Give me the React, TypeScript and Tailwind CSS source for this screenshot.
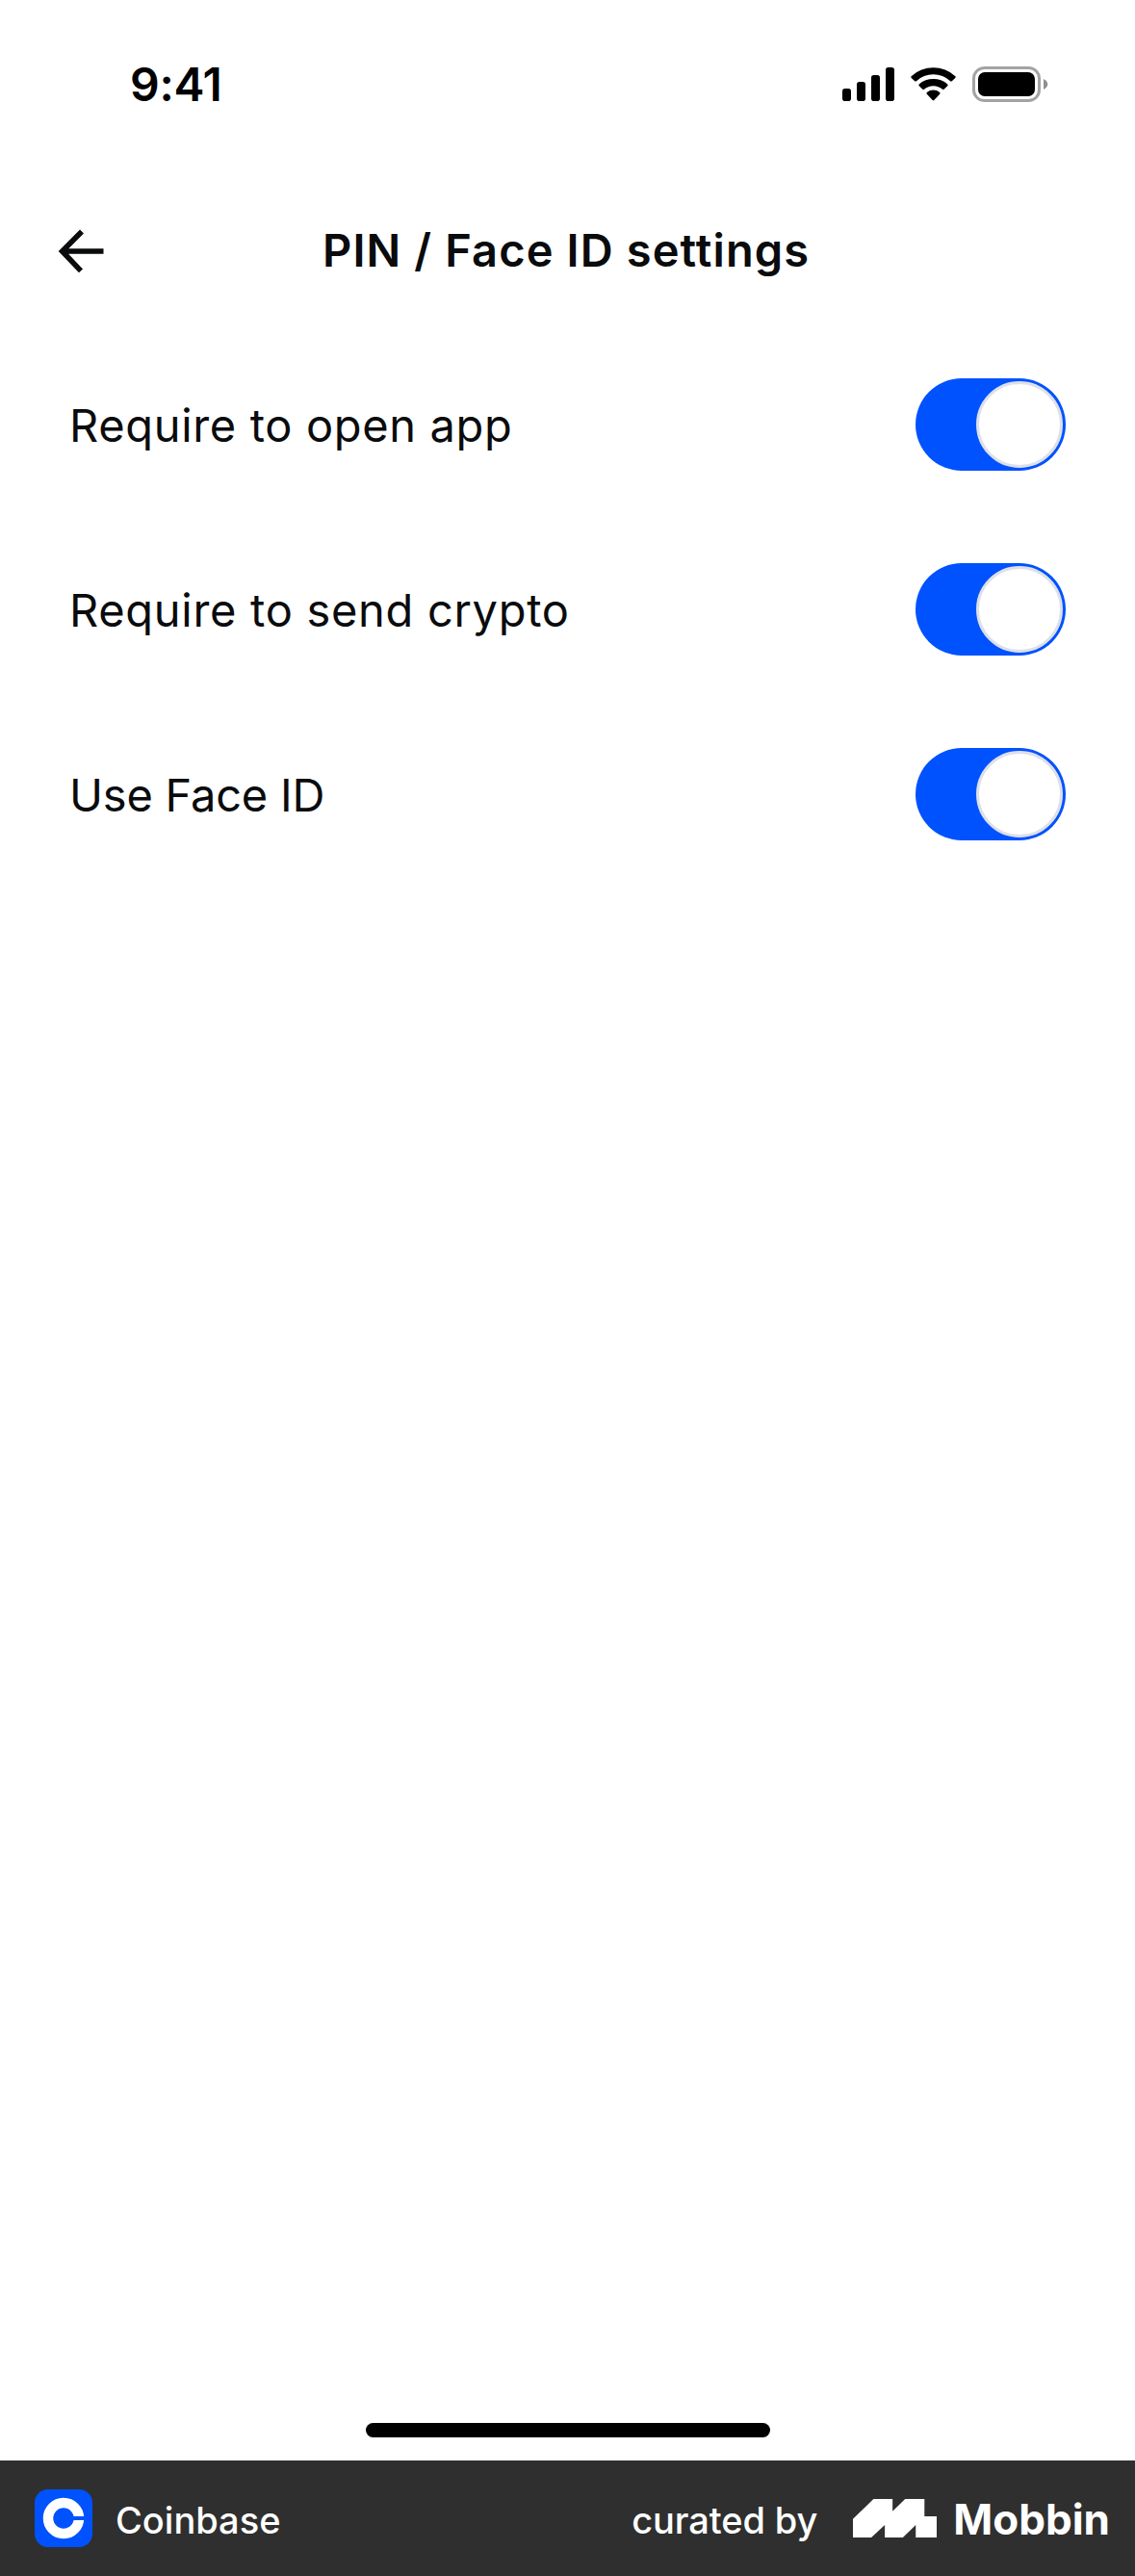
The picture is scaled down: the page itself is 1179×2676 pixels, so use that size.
const rows = [
  { label: "Require to open app", tracking: "tracking-[0.65px]" },
  { label: "Require to send crypto", tracking: "tracking-[0.7px]" },
  { label: "Use Face ID", tracking: "tracking-[-0.2px]" },
];

function Toggle() {
  return (
    <button
      type="button"
      role="switch"
      aria-checked="true"
      className="flex h-24 w-[156px] items-center justify-end rounded-full bg-[#0052ff] pr-[3px]"
    >
      <div className="size-[90px] rounded-full border-[3px] border-[#dde0e8] bg-white" />
    </button>
  );
}

function StatusIcons() {
  return (
    <svg className="h-[39px] w-[216px]" viewBox="874 68 216 39" fill="#000">
      <rect x="875" y="92" width="9" height="13" rx="2.8" />
      <rect x="890" y="85" width="9" height="20" rx="2.8" />
      <rect x="905" y="78" width="9" height="27" rx="2.8" />
      <rect x="920" y="70" width="9" height="35" rx="2.8" />
      <path d="M946.6 79.2 Q946 80 946.7 80.9 L950.2 84.3 Q951 84.9 951.9 84.2 A26 26 0 0 1 987.1 84.2 Q988 84.9 988.8 84.3 L992.3 80.9 Q993 80 992.4 79.2 A33.6 33.6 0 0 0 946.6 79.2Z" />
      <path d="M954.7 87.6 Q954 88.4 954.7 89.2 L958.4 92.7 Q959.2 93.3 960 92.7 A14.6 14.6 0 0 1 979 92.7 Q979.8 93.3 980.6 92.7 L984.3 89.2 Q985 88.4 984.3 87.6 A22 22 0 0 0 954.7 87.6Z" />
      <path d="M962.8 96 Q962 96.9 962.8 97.7 L968.7 104 Q969.5 104.8 970.3 104 L976.2 97.7 Q977 96.9 976.2 96 A10.5 10.5 0 0 0 962.8 96Z" />
      <rect x="1011.5" y="70.5" width="68" height="34" rx="11" fill="none" stroke="#a3a3a3" strokeWidth="3" />
      <rect x="1016" y="75" width="59" height="25" rx="7" />
      <path d="M1084 82 Q1088.3 84.3 1088.3 87.5 Q1088.3 90.7 1084 93Z" fill="#8f8f8f" />
    </svg>
  );
}

export default function App() {
  return (
    <div className="flex h-[2676px] w-[1179px] flex-col bg-white font-['Inter',sans-serif] text-[#0a0b0d]">
      <header className="flex h-[176px] items-start justify-between pt-[68px] pr-[89px] pl-[135px]">
        <span className="text-[48px] leading-[39px] font-semibold tracking-[-0.3px] text-black">9:41</span>
        <StatusIcons />
      </header>
      <nav className="flex h-[169px] items-center pt-[1px] pl-[60px]">
        <svg className="h-[46px] w-12" viewBox="0 0 48 46" fill="none" stroke="#0a0b0d" strokeWidth="5.6">
          <path d="M47.5 23H5M25 2.6L4.6 23L24 43.4" />
        </svg>
        <h1 className="pb-[2px] pl-[227px] text-[47px] leading-[60px] font-semibold tracking-[1.12px] whitespace-nowrap">
          PIN / Face ID settings
        </h1>
      </nav>
      <main className="flex grow flex-col">
        {rows.map(({ label, tracking }) => (
          <div key={label} className="flex h-48 items-center justify-between px-[72px]">
            <span className={`pt-[2px] text-[47px] leading-[60px] whitespace-nowrap ${tracking}`}>{label}</span>
            <Toggle />
          </div>
        ))}
      </main>
      <div className="flex h-[39px] justify-center">
        <div className="h-[15px] w-[420px] rounded-full bg-black" />
      </div>
      <footer className="flex h-[120px] items-center bg-[#2f2f2f] pl-9 text-white">
        <svg className="size-[60px]" viewBox="0 0 60 60">
          <rect width="60" height="60" rx="14" fill="#0052ff" />
          <circle cx="30" cy="30" r="16" fill="none" stroke="#fff" strokeWidth="10.5" />
          <rect x="40" y="28" width="12" height="4" fill="#0052ff" />
        </svg>
        <span className="ml-6 pt-[4px] text-[38px] leading-[60px] font-medium">Coinbase</span>
        <div className="flex grow items-center justify-end pr-[26px]">
          <span className="pt-[4px] text-[38px] leading-[60px] font-medium tracking-[-0.1px]">curated by</span>
          <svg className="ml-[37px] h-10 w-[87px]" viewBox="48 138 260 120" fill="#fff" preserveAspectRatio="none">
            <path d="M48 200L112 138H171V176L210 138H270V192H308V258H243V219L203 258H147V219L105 258H48Z" />
          </svg>
          <span className="ml-[17px] pt-px text-[44px] leading-[60px] font-bold">Mobbin</span>
        </div>
      </footer>
    </div>
  );
}
